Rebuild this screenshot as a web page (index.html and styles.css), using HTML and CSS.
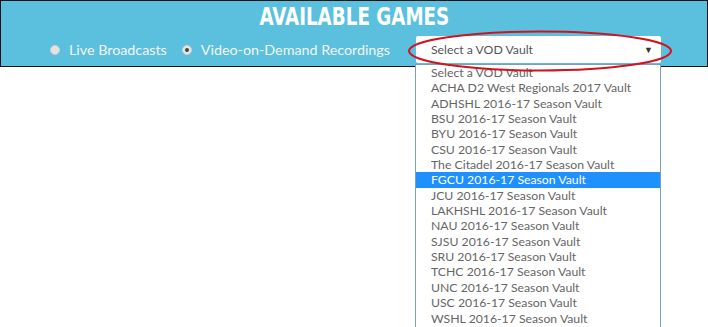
FILE: index.html
```html
<!DOCTYPE html>
<html>
<head>
<meta charset="utf-8">
<link rel="stylesheet" href="styles.css">
</head>
<body>
<div class="page">
  <header class="bar">
    <h1 class="title"><span class="title-text">AVAILABLE GAMES</span></h1>
    <div class="controls">
      <label class="radio"><span class="dot"></span>Live Broadcasts</label>
      <label class="radio"><span class="dot checked"></span>Video-on-Demand Recordings</label>
      <div class="select-wrap">
        <div class="select"><span>Select a VOD Vault</span><span class="arrow">▼</span></div>
        <svg class="ring" width="266" height="44" viewBox="0 0 266 44"><ellipse cx="133" cy="22" rx="131" ry="19.5" fill="none" stroke="#d2121c" stroke-width="2"/></svg>
        <ul class="menu">
          <li>Select a VOD Vault</li>
          <li>ACHA D2 West Regionals 2017 Vault</li>
          <li>ADHSHL 2016-17 Season Vault</li>
          <li>BSU 2016-17 Season Vault</li>
          <li>BYU 2016-17 Season Vault</li>
          <li>CSU 2016-17 Season Vault</li>
          <li>The Citadel 2016-17 Season Vault</li>
          <li class="active">FGCU 2016-17 Season Vault</li>
          <li>JCU 2016-17 Season Vault</li>
          <li>LAKHSHL 2016-17 Season Vault</li>
          <li>NAU 2016-17 Season Vault</li>
          <li>SJSU 2016-17 Season Vault</li>
          <li>SRU 2016-17 Season Vault</li>
          <li>TCHC 2016-17 Season Vault</li>
          <li>UNC 2016-17 Season Vault</li>
          <li>USC 2016-17 Season Vault</li>
          <li>WSHL 2016-17 Season Vault</li>
        </ul>
      </div>
    </div>
  </header>
</div>
</body>
</html>
```
FILE: styles.css
```css
html, body { margin: 0; padding: 0; background: #fff; }
body { font-family: Lato, "Open Sans", sans-serif; width: 708px; height: 327px; overflow: hidden; }
.bar {
  background: #5bc0de;
  border: 1px solid #141414;
  height: 65px;
  box-sizing: content-box;
  width: 706px;
}
.title {
  margin: 0;
  padding-top: 1px;
  text-align: center;
  color: #fff;
  font-family: "DejaVu Sans Condensed", "DejaVu Sans", sans-serif;
  font-weight: bold;
  font-size: 24.5px;
  line-height: 30px;
}
.title-text {
  display: inline-block;
  transform: scaleX(0.83);
  transform-origin: center;
}
.controls {
  display: flex;
  align-items: center;
  padding-left: 49px;
  margin-top: 4px;
}
.radio {
  display: flex;
  align-items: center;
  color: #f4f4f4;
  font-size: 14.3px;
  margin-right: 15px;
}
.dot {
  width: 10px; height: 10px; border-radius: 50%;
  background: #e2e2e2;
  border: 1px solid #cfcfcf;
  box-sizing: border-box;
  margin-right: 9px;
  position: relative;
}
.dot.checked { background: #e6e6e6; }
.dot.checked::after {
  content: ""; position: absolute; left: 2px; top: 2px; width: 4px; height: 4px; border-radius: 50%; background: #444;
}
.select-wrap { position: relative; margin-left: 11px; }
.select {
  width: 245px; height: 27px; box-sizing: border-box;
  background: #fff; border-radius: 2px;
  display: flex; align-items: center; justify-content: space-between;
  padding: 0 8px 0 15px;
  color: #555; font-size: 12.25px;
}
.arrow { font-size: 9px; color: #333; }
.ring { position: absolute; left: -9px; top: -7px; z-index: 2; pointer-events: none; }
.menu {
  position: absolute; left: -1px; top: 28px; width: 246px; box-sizing: border-box;
  margin: 0; padding: 0 0 4px 0; list-style: none;
  background: #fff; border: 1px solid #7f9db9;
  color: #666; font-size: 12.25px; line-height: 15.35px;
  z-index: 1;
}
.menu li { padding-left: 15px; white-space: nowrap; }
.menu li.active { background: #1e90ff; color: #fff; }
```
